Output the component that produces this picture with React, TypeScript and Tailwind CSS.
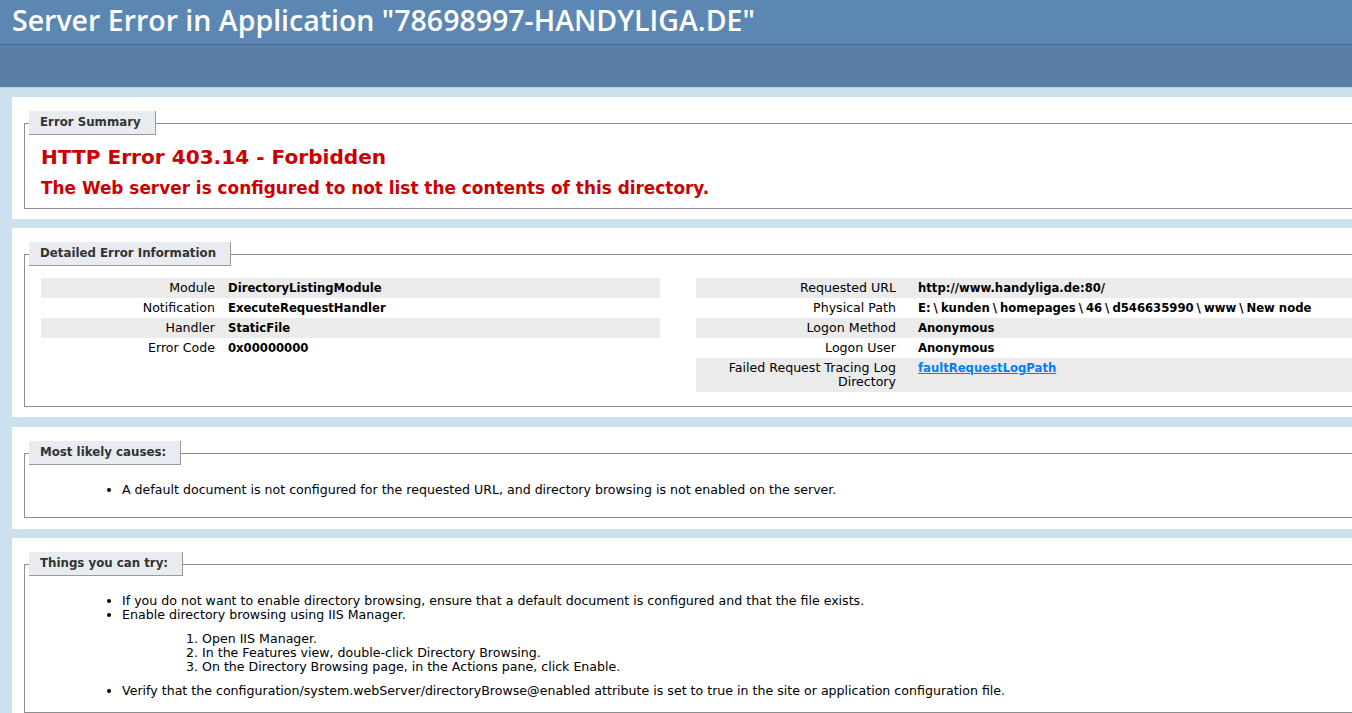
const leftRows = [
  { label: "Module", value: "DirectoryListingModule" },
  { label: "Notification", value: "ExecuteRequestHandler" },
  { label: "Handler", value: "StaticFile" },
  { label: "Error Code", value: "0x00000000" },
];

const rightRows = [
  { label: "Requested URL", value: "http://www.handyliga.de:80/" },
  { label: "Physical Path", value: "E:\\kunden\\homepages\\46\\d546635990\\www\\New node" },
  { label: "Logon Method", value: "Anonymous" },
  { label: "Logon User", value: "Anonymous" },
];

// backslashes are much wider in Verdana than in DejaVu, pad them a bit
const Path = ({ text }: { text: string }) => {
  const parts = text.split("\\");
  return (
    <>
      {parts.map((p, i) => (
        <span key={i}>
          {i > 0 && <span className="mx-[3px]">\</span>}
          {p}
        </span>
      ))}
    </>
  );
};

const Legend = ({ children }: { children: React.ReactNode }) => (
  <legend className="ml-[-12px] bg-[#e8ecf0] border-r border-b border-[#9a9a9a] pt-[3px] pb-[4px] pl-[11px] pr-[14px] font-bold text-[#333333] text-[11.8px] leading-[16px]">
    {children}
  </legend>
);

const App = () => {
  return (
    <div
      className="min-h-screen w-full overflow-hidden bg-[#cbe1ef] text-[12.6px] text-black"
      style={{ fontFamily: '"DejaVu Sans", Verdana, sans-serif' }}
    >
      {/* Header */}
      <div className="h-[44px] bg-[#5c87b2] px-[12px] pt-[3px]">
        <h1
          className="text-[28.5px] leading-[34px] font-semibold text-white whitespace-nowrap"
          style={{ fontFamily: '"Open Sans", "DejaVu Sans", sans-serif' }}
        >
          Server Error in Application "78698997-HANDYLIGA.DE"
        </h1>
      </div>
      <div className="h-[44px] bg-[#5a7fa5] border-t border-[#4a6c8e] border-b border-b-[#c1cfdd]"></div>

      {/* Content */}
      <div className="ml-[12px] mr-[-40px] mt-[9px] flex flex-col">
        {/* Error Summary */}
        <div className="bg-white pl-[12px] pt-[14px] pb-[10px]">
          <fieldset className="border border-[#8e8e8e] pl-[16px] pb-[10px]">
            <Legend>Error Summary</Legend>
            <h2 className="mt-[11px] text-[20.1px] leading-[23px] font-bold text-[#cc0000]">HTTP Error 403.14 - Forbidden</h2>
            <h3 className="mt-[9px] text-[16.9px] leading-[20px] font-bold text-[#cc0000]">
              The Web server is configured to not list the contents of this directory.
            </h3>
          </fieldset>
        </div>

        {/* Detailed Error Information */}
        <div className="mt-[9px] bg-white pl-[12px] pt-[14px] pb-[10px]">
          <fieldset className="border border-[#8e8e8e] pl-[16px] pb-[14px]">
            <Legend>Detailed Error Information</Legend>
            <div className="mt-[12px] flex items-start">
              <div className="w-[619px] shrink-0">
                {leftRows.map((r, i) => (
                  <div key={r.label} className={`flex leading-[14px] py-[3px] ${i % 2 === 0 ? "bg-[#ebebeb]" : ""}`}>
                    <div className="w-[187px] shrink-0 pr-[13px] text-right">{r.label}</div>
                    <div className="font-bold text-[11.65px] whitespace-nowrap">{r.value}</div>
                  </div>
                ))}
              </div>
              <div className="ml-[36px] flex-1">
                {rightRows.map((r, i) => (
                  <div key={r.label} className={`flex leading-[14px] py-[3px] ${i % 2 === 0 ? "bg-[#ebebeb]" : ""}`}>
                    <div className="w-[222px] shrink-0 pr-[22px] text-right">{r.label}</div>
                    <div className="font-bold text-[11.65px] whitespace-nowrap">
                      <Path text={r.value} />
                    </div>
                  </div>
                ))}
                <div className="flex leading-[14px] py-[3px] bg-[#ebebeb]">
                  <div className="w-[222px] shrink-0 pr-[22px] text-right">
                    Failed Request Tracing Log
                    <br />
                    Directory
                  </div>
                  <div>
                    <a href="#" className="font-bold text-[11.65px] text-[#007eff] underline">
                      faultRequestLogPath
                    </a>
                  </div>
                </div>
              </div>
            </div>
          </fieldset>
        </div>

        {/* Most likely causes */}
        <div className="mt-[10px] bg-white pl-[12px] pt-[14px] pb-[11px]">
          <fieldset className="border border-[#8e8e8e] pl-[16px] pb-[20px]">
            <Legend>Most likely causes:</Legend>
            <ul className="mt-[18px] ml-[81px] list-disc leading-[14px]">
              <li>A default document is not configured for the requested URL, and directory browsing is not enabled on the server.</li>
            </ul>
          </fieldset>
        </div>

        {/* Things you can try */}
        <div className="mt-[9px] bg-white pl-[12px] pt-[14px] pb-[10px]">
          <fieldset className="border border-[#8e8e8e] pl-[16px] pb-[14px]">
            <Legend>Things you can try:</Legend>
            <ul className="mt-[18px] ml-[81px] list-disc leading-[14px]">
              <li>If you do not want to enable directory browsing, ensure that a default document is configured and that the file exists.</li>
              <li>
                Enable directory browsing using IIS Manager.
                <ol className="mt-[10px] mb-[10px] ml-[80px] list-decimal">
                  <li>Open IIS Manager.</li>
                  <li>In the Features view, double-click Directory Browsing.</li>
                  <li>On the Directory Browsing page, in the Actions pane, click Enable.</li>
                </ol>
              </li>
              <li>
                Verify that the configuration/system.webServer/directoryBrowse@enabled attribute is set to true in the site or application configuration file.
              </li>
            </ul>
          </fieldset>
        </div>
      </div>
    </div>
  );
};

export default App;
